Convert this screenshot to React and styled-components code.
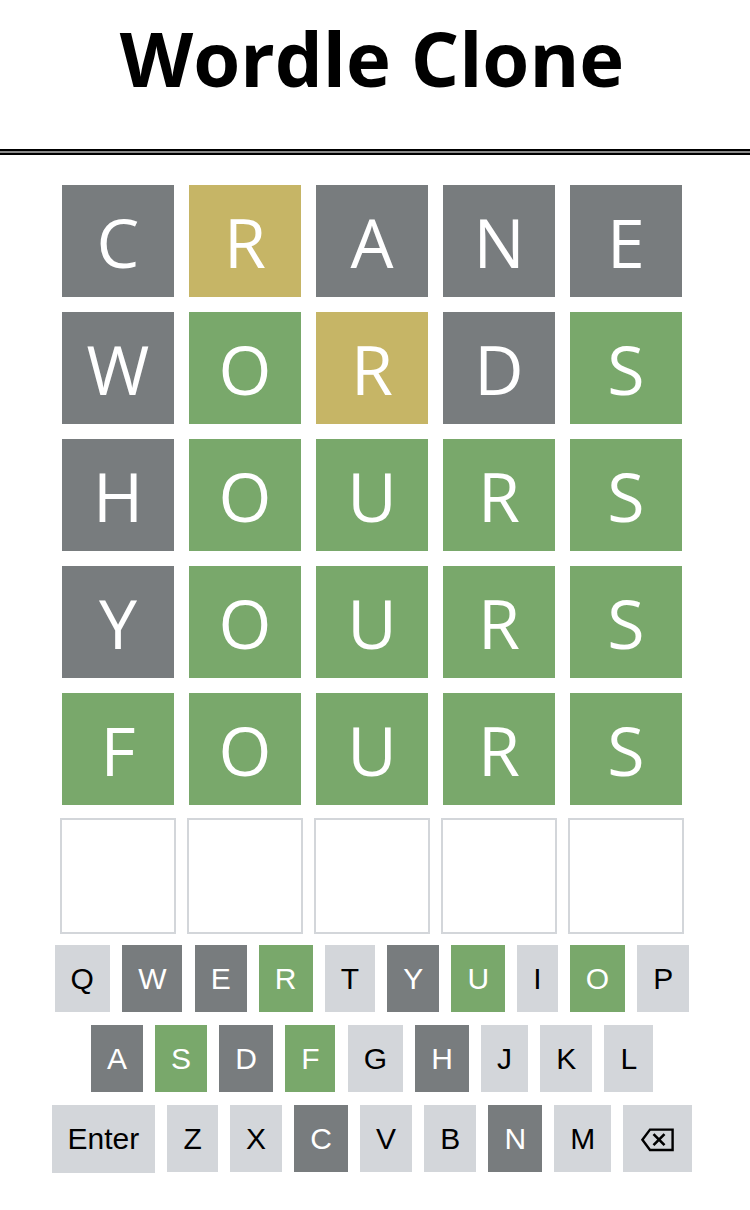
import React from 'react';
import styled, { createGlobalStyle } from 'styled-components';

const COLORS = {
  correct: '#79a86b',
  present: '#c6b566',
  absent: '#787c7e',
  empty: '#ffffff',
};

const guesses = [
  { word: 'CRANE', states: ['absent', 'present', 'absent', 'absent', 'absent'] },
  { word: 'WORDS', states: ['absent', 'correct', 'present', 'absent', 'correct'] },
  { word: 'HOURS', states: ['absent', 'correct', 'correct', 'correct', 'correct'] },
  { word: 'YOURS', states: ['absent', 'correct', 'correct', 'correct', 'correct'] },
  { word: 'FOURS', states: ['correct', 'correct', 'correct', 'correct', 'correct'] },
  { word: '     ', states: ['empty', 'empty', 'empty', 'empty', 'empty'] },
];

const keyStates = {
  W: 'absent', E: 'absent', Y: 'absent', A: 'absent', D: 'absent', H: 'absent', C: 'absent', N: 'absent',
  R: 'correct', U: 'correct', O: 'correct', S: 'correct', F: 'correct',
};

const keyRows = [
  ['Q', 'W', 'E', 'R', 'T', 'Y', 'U', 'I', 'O', 'P'],
  ['A', 'S', 'D', 'F', 'G', 'H', 'J', 'K', 'L'],
  ['Enter', 'Z', 'X', 'C', 'V', 'B', 'N', 'M', 'Back'],
];

function BackspaceIcon() {
  return (
    <svg width="37" height="26" viewBox="0 0 37 26" fill="none">
      <path d="M11 3.6 H33.6 V24 H11 L3.4 13.8 Z" stroke="#000" strokeWidth="2.4" strokeLinejoin="miter" />
      <path d="M14.5 8.2 L25.5 19.2 M25.5 8.2 L14.5 19.2" stroke="#000" strokeWidth="2.6" />
    </svg>
  );
}

export default function App() {
  return (
    <>
      <GlobalStyle />
      <Header>
        <Title>Wordle Clone</Title>
      </Header>
      <Divider />
      <Main>
        <Board>
          {guesses.map((g, r) => g.word.split('').map((ch, c) => (
            <Tile key={`${r}-${c}`} $state={g.states[c]}>{ch.trim()}</Tile>
          )))}
        </Board>
        <Keyboard>
          {keyRows.map((row, i) => (
            <KeyRow key={i}>
              {row.map((k) => (
                <Key key={k} type="button" $state={keyStates[k]}>
                  {k === 'Back' ? <BackspaceIcon /> : k}
                </Key>
              ))}
            </KeyRow>
          ))}
        </Keyboard>
      </Main>
    </>
  );
}

const GlobalStyle = createGlobalStyle`
  body {
    margin: 0;
    background: #fff;
    font-family: "Open Sans", "Liberation Sans", sans-serif;
  }
`;

const Header = styled.header`
  height: 149px;
  padding-right: 6px;
  box-sizing: border-box;
  padding-top: 20px;
`;

const Title = styled.h1`
  margin: 0;
  text-align: center;
  font-family: "Open Sans", sans-serif;
  font-weight: 700;
  font-size: 76px;
  line-height: 1;
  color: #000;
`;

const Divider = styled.div`
  height: 2px;
  border-top: 2px solid #000;
  border-bottom: 2px solid #000;
  background: #8a8a8a;
`;

const Main = styled.main`
  padding: 28px 6px 0 0;
  display: flex;
  flex-direction: column;
  align-items: center;
`;

const Board = styled.div`
  display: grid;
  grid-template-columns: repeat(5, 116px);
  grid-auto-rows: 116px;
  gap: 11px;
`;

const Tile = styled.div`
  box-sizing: border-box;
  border: 2px solid ${({ $state }) => ($state === 'empty' ? '#d3d6da' : '#fff')};
  background: ${({ $state }) => COLORS[$state]};
  background-clip: padding-box;
  color: #fff;
  display: flex;
  align-items: center;
  justify-content: center;
  font-family: "Open Sans", sans-serif;
  font-size: 68px;
  font-weight: 400;
  line-height: 1;
  padding-top: 2px;
`;

const Keyboard = styled.div`
  margin-top: 11px;
  display: flex;
  flex-direction: column;
  align-items: center;
  gap: 13px;
`;

const KeyRow = styled.div`
  display: flex;
  gap: 12.2px;
`;

const Key = styled.button`
  height: ${({ children }) => (children === 'Enter' ? '68px' : '67px')};
  padding: 0 16px;
  border: 0;
  border-radius: 0;
  margin: 0;
  display: flex;
  align-items: center;
  justify-content: center;
  font-family: "Liberation Sans", Arial, sans-serif;
  font-size: 30px;
  background: ${({ $state }) => ($state ? COLORS[$state] : '#d3d6da')};
  color: ${({ $state }) => ($state ? '#fff' : '#000')};
`;
